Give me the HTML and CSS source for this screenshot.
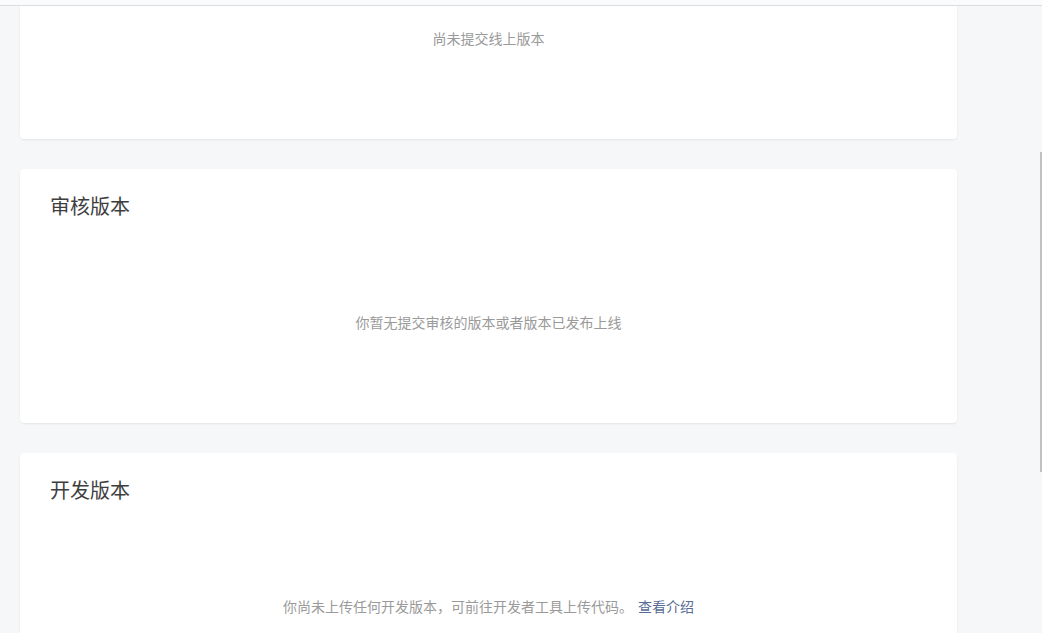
FILE: index.html
```html
<!DOCTYPE html>
<html lang="zh-CN">
<head>
  <meta charset="UTF-8">
  <meta name="viewport" content="width=device-width, initial-scale=1.0">
  <title>版本管理</title>
  <link rel="stylesheet" href="styles.css">
</head>
<body>
  <div class="topbar"></div>
  <div class="main">
    <div class="card card-first">
      <h2 class="card-title">线上版本</h2>
      <div class="empty">尚未提交线上版本</div>
    </div>
    <div class="card">
      <h2 class="card-title">审核版本</h2>
      <div class="empty">你暂无提交审核的版本或者版本已发布上线</div>
    </div>
    <div class="card">
      <h2 class="card-title">开发版本</h2>
      <div class="empty">你尚未上传任何开发版本，可前往开发者工具上传代码。<a href="#" class="link">查看介绍</a></div>
    </div>
  </div>
  <div class="scroll-thumb"></div>
</body>
</html>
```

FILE: styles.css
```css
body {
  margin: 0;
  font-family: "Noto Sans CJK SC", "Noto Sans", sans-serif;
  background: #f6f7f9;
  overflow: hidden;
}
.topbar {
  height: 5px;
  background: #fafbfc;
  border-bottom: 1px solid #dcdcdc;
}
.main {
  height: 627px;
  overflow: hidden;
  padding: 0 85px 0 20px;
}
.card {
  background: #fff;
  border-radius: 4px;
  box-shadow: 0 1px 2px rgba(0,0,0,0.08);
  padding: 26px 30px 0;
  margin-bottom: 30px;
}
.card-first {
  margin-top: -121px;
}
.card-title {
  margin: 0;
  font-size: 20px;
  line-height: 22px;
  font-weight: normal;
  color: #3e3e3e;
}
.empty {
  padding: 95px 0 91px;
  font-size: 14px;
  line-height: 20px;
  color: #9a9a9a;
  text-align: center;
}
.link {
  margin-left: 5px;
  color: #576b95;
  text-decoration: none;
}
.scroll-thumb {
  position: absolute;
  top: 152px;
  right: 0;
  width: 2px;
  height: 320px;
  background: #c1c1c1;
}
```
